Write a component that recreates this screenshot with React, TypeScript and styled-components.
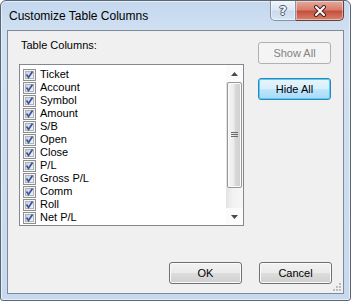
import React from 'react';
import styled, { createGlobalStyle } from 'styled-components';

const Global = createGlobalStyle`
	html, body {
		margin: 0;
		padding: 0;
		background: #fff;
	}
	* {
		box-sizing: border-box;
	}
`;

const Window = styled.div`
	width: 351px;
	height: 301px;
	border: 1px solid #5b6673;
	border-radius: 6px 6px 3px 3px;
	background: linear-gradient(180deg, #c3d7ee 0%, #d3e2f3 12%, #c6d9ee 100%);
	box-shadow: inset 0 0 0 1px #e6eff9;
	display: flex;
	flex-direction: column;
	font-family: 'Liberation Sans', Arial, sans-serif;
`;

const TitleBar = styled.div`
	height: 29px;
	display: flex;
	align-items: flex-start;
	padding-right: 6px;
`;

const Title = styled.div`
	flex: 1;
	padding: 8px 0 0 8px;
	font-size: 12px;
	line-height: 15px;
	color: #000;
`;

const CaptionButton = styled.div<{ $close?: boolean }>`
	height: 20px;
	width: ${(p) => (p.$close ? '48px' : '26px')};
	display: flex;
	align-items: center;
	justify-content: center;
	border: 1px solid ${(p) => (p.$close ? '#6e3b36' : '#8593a4')};
	border-top: none;
	border-left: ${(p) => (p.$close ? 'none' : '1px solid #8593a4')};
	border-radius: ${(p) => (p.$close ? '0 0 5px 0' : '0 0 0 5px')};
	background: ${(p) =>
		p.$close
			? 'linear-gradient(180deg, #e6a99c 0%, #d77f6e 45%, #c44f3e 55%, #d9826d 100%)'
			: 'linear-gradient(180deg, #eef4fa 0%, #dde8f4 45%, #cbdbed 55%, #d8e6f5 100%)'};
	box-shadow: inset 0 0 0 1px rgba(255, 255, 255, 0.45);
`;

const HelpGlyph = styled.span`
	font-family: 'DejaVu Sans', sans-serif;
	font-size: 13px;
	font-weight: bold;
	color: #f4f7fb;
	text-shadow: 1px 0 0 #4a5766, -1px 0 0 #4a5766, 0 1px 0 #4a5766, 0 -1px 0 #4a5766;
	line-height: 14px;
`;

const Client = styled.div`
	flex: 1;
	margin: 0 6px 6px 6px;
	border: 1px solid #7f8a98;
	background: #f0f0f0;
	display: flex;
	flex-direction: column;
	padding: 0 11px 9px 11px;
	font-size: 11px;
	color: #000;
	position: relative;
`;

const TopSection = styled.div`
	display: flex;
	gap: 14px;
`;

const LeftColumn = styled.div`
	width: 225px;
	padding-top: 8px;
	display: flex;
	flex-direction: column;
`;

const Label = styled.div`
	line-height: 13px;
	margin: 0 0 12px 2px;
`;

const ListBox = styled.div`
	height: 162px;
	border: 1px solid #828790;
	background: #fff;
	display: flex;
`;

const Items = styled.div`
	flex: 1;
	padding-top: 3px;
	display: flex;
	flex-direction: column;
`;

const Item = styled.div`
	height: 13px;
	display: flex;
	align-items: center;
	gap: 4px;
	padding-left: 3px;
	line-height: 13px;
`;

const ScrollBar = styled.div`
	width: 17px;
	display: flex;
	flex-direction: column;
	background: linear-gradient(90deg, #e3e3e3 0%, #f2f2f2 40%, #f7f7f7 100%);
`;

const Arrow = styled.div`
	height: 17px;
	display: flex;
	align-items: center;
	justify-content: center;
	background: #fbfbfb;
`;

const Track = styled.div`
	flex: 1;
	padding: 0 1px;
`;

const Thumb = styled.div`
	height: 106px;
	border: 1px solid #979797;
	border-radius: 2px;
	background: linear-gradient(90deg, #f5f5f5 0%, #ececec 45%, #d9d9d9 55%, #cfcfcf 100%);
	box-shadow: inset 0 0 0 1px #fbfbfb;
	display: flex;
	align-items: center;
	justify-content: center;
`;

const RightColumn = styled.div`
	padding-top: 11px;
	display: flex;
	flex-direction: column;
	gap: 14px;
`;

const Button = styled.div<{ $variant?: 'default' | 'disabled' }>`
	width: 73px;
	height: 22px;
	display: flex;
	align-items: center;
	justify-content: center;
	border-radius: 3px;
	font-size: 11px;
	border: 1px solid
		${(p) => (p.$variant === 'default' ? '#3c7fb1' : p.$variant === 'disabled' ? '#adb2b5' : '#707070')};
	color: ${(p) => (p.$variant === 'disabled' ? '#838383' : '#000')};
	background: ${(p) =>
		p.$variant === 'default'
			? 'linear-gradient(180deg, #e5f4fc 0%, #d9effc 48%, #bee6fd 52%, #a8d9f6 100%)'
			: p.$variant === 'disabled'
			? '#f4f4f4'
			: 'linear-gradient(180deg, #f2f2f2 0%, #ebebeb 48%, #dddddd 52%, #cfcfcf 100%)'};
	box-shadow: ${(p) =>
		p.$variant === 'default'
			? 'inset 0 0 0 1px #48d2fd'
			: p.$variant === 'disabled'
			? 'none'
			: 'inset 0 0 0 1px #fcfcfc'};
`;

const Spacer = styled.div`
	flex: 1;
`;

const BottomRow = styled.div`
	display: flex;
	justify-content: flex-end;
	gap: 17px;
`;

const Grip = styled.svg`
	position: absolute;
	right: 1px;
	bottom: 1px;
`;

const columns = [
	'Ticket',
	'Account',
	'Symbol',
	'Amount',
	'S/B',
	'Open',
	'Close',
	'P/L',
	'Gross P/L',
	'Comm',
	'Roll',
	'Net P/L',
];

const CheckBox = () => (
	<svg width="13" height="12" viewBox="0 0 13 12">
		<defs>
			<linearGradient id="cbFill" x1="0" y1="0" x2="1" y2="1">
				<stop offset="0" stopColor="#cbcfd5" />
				<stop offset="1" stopColor="#f6f6f6" />
			</linearGradient>
		</defs>
		<rect x="0.5" y="0.5" width="12" height="11" fill="#f4f4f4" stroke="#8e8f8f" />
		<rect x="2.5" y="2.5" width="8" height="7" fill="url(#cbFill)" stroke="#b0b4ba" />
		<path d="M3.5 5.5 L5.5 8.5 L9.5 2.5" fill="none" stroke="#3a56a0" strokeWidth="1.7" />
	</svg>
);

const App = () => {
	return (
		<>
			<Global />
			<Window>
				<TitleBar>
					<Title>Customize Table Columns</Title>
					<CaptionButton>
						<HelpGlyph>?</HelpGlyph>
					</CaptionButton>
					<CaptionButton $close>
						<svg width="14" height="12" viewBox="0 0 14 12">
							<path d="M3 2 L11 10 M11 2 L3 10" stroke="#4a2622" strokeWidth="4" strokeLinecap="round" />
							<path d="M3 2 L11 10 M11 2 L3 10" stroke="#fff" strokeWidth="2" strokeLinecap="round" />
						</svg>
					</CaptionButton>
				</TitleBar>
				<Client>
					<TopSection>
						<LeftColumn>
							<Label>Table Columns:</Label>
							<ListBox>
								<Items>
									{columns.map((c) => (
										<Item key={c}>
											<CheckBox />
											<span>{c}</span>
										</Item>
									))}
								</Items>
								<ScrollBar>
									<Arrow>
										<svg width="7" height="4" viewBox="0 0 7 4">
											<path d="M3.5 0 L7 4 L0 4 Z" fill="#4a4a4a" />
										</svg>
									</Arrow>
									<Track>
										<Thumb>
											<svg width="7" height="6" viewBox="0 0 7 6">
												<path d="M0 0.5 H7 M0 2.5 H7 M0 4.5 H7" stroke="#6b6b6b" strokeWidth="1" />
											</svg>
										</Thumb>
									</Track>
									<Arrow>
										<svg width="7" height="4" viewBox="0 0 7 4">
											<path d="M0 0 L7 0 L3.5 4 Z" fill="#4a4a4a" />
										</svg>
									</Arrow>
								</ScrollBar>
							</ListBox>
						</LeftColumn>
						<RightColumn>
							<Button $variant="disabled">Show All</Button>
							<Button $variant="default">Hide All</Button>
						</RightColumn>
					</TopSection>
					<Spacer />
					<BottomRow>
						<Button>OK</Button>
						<Button>Cancel</Button>
					</BottomRow>
					<Grip width="10" height="10" viewBox="0 0 10 10">
						<path
							d="M7 1h2v2h-2z M4 4h2v2h-2z M7 4h2v2h-2z M1 7h2v2h-2z M4 7h2v2h-2z M7 7h2v2h-2z"
							fill="#b9bcc0"
						/>
					</Grip>
				</Client>
			</Window>
		</>
	);
};

export default App;
